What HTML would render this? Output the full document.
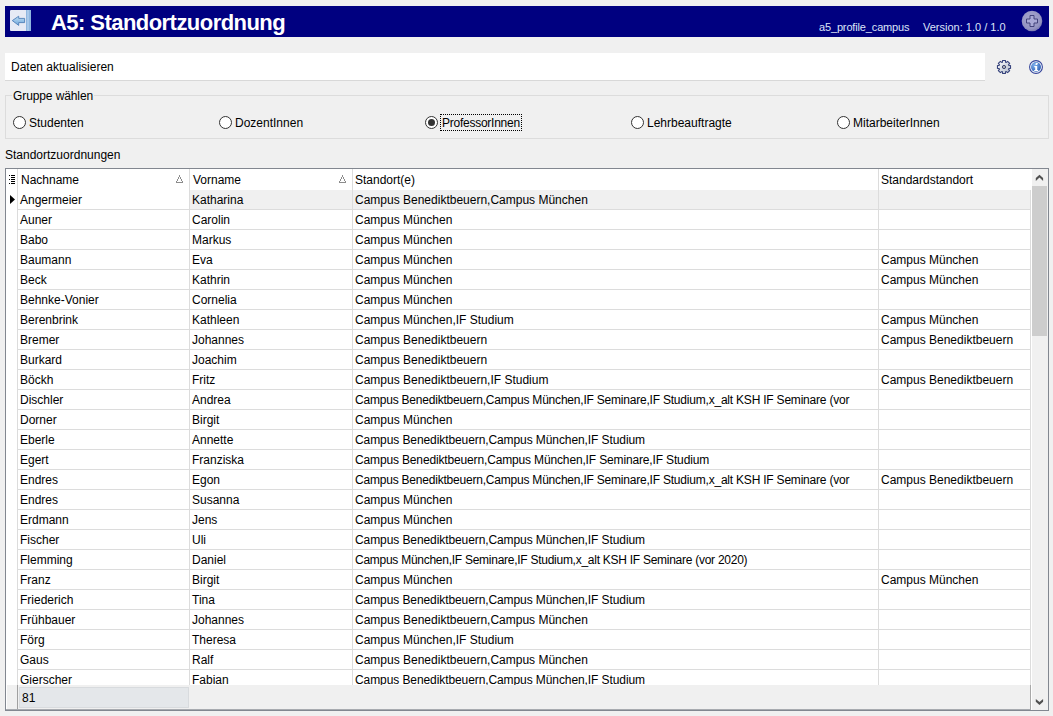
<!DOCTYPE html>
<html><head><meta charset="utf-8">
<style>
*{margin:0;padding:0;box-sizing:border-box}
html,body{width:1053px;height:716px;overflow:hidden;background:#f0f0f0;font-family:"Liberation Sans",sans-serif;font-size:12px;color:#000;position:relative}
.a{position:absolute;white-space:nowrap}
#hdr{position:absolute;left:5px;top:6px;width:1044px;height:31px;background:#000080}
.c{position:absolute;white-space:nowrap;overflow:hidden;line-height:20px;padding-left:2px}
.hl{position:absolute;left:18px;width:1012px;height:1px;background:#dcdcdc}
.vl{position:absolute;width:1px;background:#dcdcdc}
.radio{position:absolute;width:13px;height:13px;border:1px solid #333;border-radius:50%;background:#fff}
.rl{position:absolute;white-space:nowrap;line-height:18px}
</style></head><body>
<div id="hdr"></div>
<!-- back icon -->
<svg class="a" style="left:10px;top:10px" width="21" height="21" viewBox="0 0 21 21">
 <rect x="0" y="0" width="21" height="21" rx="1" fill="#e6eaf5"/>
 <rect x="16" y="0" width="5" height="21" fill="#8fb6df"/>
 <rect x="17" y="0" width="2" height="21" fill="#a8c8ea"/>
 <defs><linearGradient id="ag" x1="0" y1="0" x2="0" y2="1"><stop offset="0" stop-color="#c4e2f6"/><stop offset="1" stop-color="#6aa2d8"/></linearGradient></defs><path d="M2.3 10.6 L8.7 6.2 L8.7 8.4 L14.6 8.4 L14.6 12.6 L8.7 12.6 L8.7 15.4 Z" fill="url(#ag)" stroke="#4f7fb8" stroke-width="0.9" stroke-linejoin="round"/>
</svg>
<div class="a" style="left:51px;top:9px;font-size:22px;font-weight:bold;color:#fff;line-height:28px;letter-spacing:-0.55px">A5: Standortzuordnung</div>
<div class="a" style="left:819px;top:19px;font-size:11px;color:#dce4f8;line-height:16px;letter-spacing:-0.15px">a5_profile_campus</div>
<div class="a" style="left:923px;top:19px;font-size:11px;color:#dce4f8;line-height:16px;letter-spacing:0px">Version: 1.0 / 1.0</div>
<svg class="a" style="left:1021px;top:10px" width="22" height="22" viewBox="0 0 22 22">
 <defs><radialGradient id="pg" cx="0.45" cy="0.4" r="0.6"><stop offset="0" stop-color="#a8a8d0"/><stop offset="0.8" stop-color="#9494c2"/><stop offset="1" stop-color="#7a7ab0"/></radialGradient></defs><circle cx="11" cy="11" r="10.3" fill="url(#pg)"/>
 <path d="M9 5.5 H13 V9 H16.5 V13 H13 V16.5 H9 V13 H5.5 V9 H9 Z" fill="#aaaad6" stroke="#3a3a74" stroke-width="0.9"/>
</svg>

<!-- Daten aktualisieren -->
<div class="a" style="left:5px;top:53px;width:980px;height:28px;background:#fff;border-bottom:1px solid #d8d8d8"></div>
<div class="a" style="left:11px;top:59px;line-height:16px">Daten aktualisieren</div>
<!-- gear -->
<svg class="a" style="left:996px;top:59px" width="16" height="16" viewBox="0 0 16 16">
 <defs><linearGradient id="gg" x1="0" y1="0" x2="1" y2="1"><stop offset="0" stop-color="#ffffff"/><stop offset="1" stop-color="#aeb8c8"/></linearGradient></defs>
 <path d="M6.37 3.27 L6.61 1.45 L9.39 1.45 L9.63 3.27 L10.19 3.51 L11.65 2.38 L13.62 4.35 L12.49 5.81 L12.73 6.37 L14.55 6.61 L14.55 9.39 L12.73 9.63 L12.49 10.19 L13.62 11.65 L11.65 13.62 L10.19 12.49 L9.63 12.73 L9.39 14.55 L6.61 14.55 L6.37 12.73 L5.81 12.49 L4.35 13.62 L2.38 11.65 L3.51 10.19 L3.27 9.63 L1.45 9.39 L1.45 6.61 L3.27 6.37 L3.51 5.81 L2.38 4.35 L4.35 2.38 L5.81 3.51 Z" fill="url(#gg)" stroke="#34407a" stroke-width="1.05" stroke-linejoin="miter"/>
 <circle cx="8" cy="8" r="1.6" fill="#b8b8b8" stroke="#3a4470" stroke-width="1"/>
</svg>
<!-- info -->
<svg class="a" style="left:1028px;top:59px" width="16" height="16" viewBox="0 0 16 16">
 <defs><radialGradient id="ig" cx="0.35" cy="0.3" r="0.8"><stop offset="0" stop-color="#7fb0ea"/><stop offset="1" stop-color="#2a5cb4"/></radialGradient></defs>
 <circle cx="8" cy="8" r="6.4" fill="#fff" stroke="#34449a" stroke-width="1.1"/>
 <circle cx="8" cy="8" r="5" fill="url(#ig)"/>
 <ellipse cx="8.6" cy="4.9" rx="1.3" ry="1" fill="#fff" transform="rotate(-25 8.6 4.9)"/>
 <path d="M6.3 7 H9.2 V11 H10.2 V12.3 H6.2 V11 H7.2 V8.2 H6.3 Z" fill="#fff"/>
</svg>
<!-- Group box -->
<div class="a" style="left:5px;top:95px;width:1044px;height:44px;border:1px solid #dcdcdc"></div>
<div class="a" style="left:12px;top:88px;line-height:16px;background:#f0f0f0;padding:0 1px 0 1px;letter-spacing:-0.1px">Gruppe wählen</div>
<div class="radio" style="left:13px;top:116px"></div><div class="rl" style="left:29px;top:114px">Studenten</div>
<div class="radio" style="left:219px;top:116px"></div><div class="rl" style="left:235px;top:114px">DozentInnen</div>
<div class="radio" style="left:425px;top:116px"><div style="position:absolute;left:2px;top:2px;width:7px;height:7px;border-radius:50%;background:#333"></div></div>
<div class="rl" style="left:440px;top:114px;border:1px dotted #000;line-height:16px;padding:0 0 0 1px;height:17px;width:82px;letter-spacing:-0.25px;overflow:hidden">ProfessorInnen</div>
<div class="radio" style="left:631px;top:116px"></div><div class="rl" style="left:647px;top:114px">Lehrbeauftragte</div>
<div class="radio" style="left:837px;top:116px"></div><div class="rl" style="left:853px;top:114px">MitarbeiterInnen</div>

<div class="a" style="left:5px;top:147px;line-height:16px">Standortzuordnungen</div>

<!-- Grid -->
<div class="a" style="left:5px;top:168px;width:1044px;height:543px;border:1px solid #828790;background:#fff"></div>
<!-- header separators -->
<div class="vl" style="left:17px;top:169px;height:516px"></div>
<div class="vl" style="left:189px;top:169px;height:516px"></div>
<div class="vl" style="left:352px;top:169px;height:516px"></div>
<div class="vl" style="left:878px;top:169px;height:516px"></div>
<div class="vl" style="left:1030px;top:190px;height:495px"></div>
<div class="a" style="left:21px;top:170px;line-height:20px">Nachname</div>
<div class="a" style="left:193px;top:170px;line-height:20px">Vorname</div>
<div class="a" style="left:355px;top:170px;line-height:20px">Standort(e)</div>
<div class="a" style="left:881px;top:170px;line-height:20px">Standardstandort</div>
<svg class="a" style="left:176px;top:175px" width="7" height="8" viewBox="0 0 7 8" shape-rendering="crispEdges" fill="#8c8c8c"><rect x="3" y="0" width="1" height="2"/><rect x="2" y="2" width="1" height="2"/><rect x="4" y="2" width="1" height="2"/><rect x="1" y="4" width="1" height="2"/><rect x="5" y="4" width="1" height="2"/><rect x="0" y="6" width="1" height="1"/><rect x="6" y="6" width="1" height="1"/><rect x="0" y="7" width="7" height="1"/></svg>
<svg class="a" style="left:339px;top:175px" width="7" height="8" viewBox="0 0 7 8" shape-rendering="crispEdges" fill="#8c8c8c"><rect x="3" y="0" width="1" height="2"/><rect x="2" y="2" width="1" height="2"/><rect x="4" y="2" width="1" height="2"/><rect x="1" y="4" width="1" height="2"/><rect x="5" y="4" width="1" height="2"/><rect x="0" y="6" width="1" height="1"/><rect x="6" y="6" width="1" height="1"/><rect x="0" y="7" width="7" height="1"/></svg>
<!-- column chooser icon -->
<svg class="a" style="left:9px;top:175px" width="7" height="10" viewBox="0 0 7 10">
 <rect x="0" y="0" width="1" height="1" fill="#000"/><rect x="2" y="0" width="4" height="1" fill="#000"/>
 <rect x="2" y="2" width="4" height="1" fill="#000"/>
 <rect x="0" y="4" width="1" height="1" fill="#000"/><rect x="2" y="4" width="4" height="1" fill="#000"/>
 <rect x="2" y="6" width="4" height="1" fill="#000"/>
 <rect x="0" y="8" width="1" height="1" fill="#000"/><rect x="2" y="8" width="4" height="1" fill="#000"/>
</svg>
<!-- row indicator -->
<svg class="a" style="left:10px;top:195px" width="6" height="9" viewBox="0 0 6 9"><path d="M0 0 L5 4.5 L0 9 Z" fill="#000"/></svg>
<div class="c" style="left:18px;top:190px;width:171px;height:19px;background:#fff">Angermeier</div>
<div class="c" style="left:190px;top:190px;width:162px;height:19px;background:#f0f0f0">Katharina</div>
<div class="c" style="left:353px;top:190px;width:525px;height:19px;background:#f0f0f0">Campus Benediktbeuern,Campus München</div>
<div class="c" style="left:879px;top:190px;width:151px;height:19px;background:#f0f0f0"></div>
<div class="hl" style="top:209px"></div>
<div class="c" style="left:18px;top:210px;width:171px;height:19px;background:#fff">Auner</div>
<div class="c" style="left:190px;top:210px;width:162px;height:19px;background:#fff">Carolin</div>
<div class="c" style="left:353px;top:210px;width:525px;height:19px;background:#fff">Campus München</div>
<div class="c" style="left:879px;top:210px;width:151px;height:19px;background:#fff"></div>
<div class="hl" style="top:229px"></div>
<div class="c" style="left:18px;top:230px;width:171px;height:19px;background:#fff">Babo</div>
<div class="c" style="left:190px;top:230px;width:162px;height:19px;background:#fff">Markus</div>
<div class="c" style="left:353px;top:230px;width:525px;height:19px;background:#fff">Campus München</div>
<div class="c" style="left:879px;top:230px;width:151px;height:19px;background:#fff"></div>
<div class="hl" style="top:249px"></div>
<div class="c" style="left:18px;top:250px;width:171px;height:19px;background:#fff">Baumann</div>
<div class="c" style="left:190px;top:250px;width:162px;height:19px;background:#fff">Eva</div>
<div class="c" style="left:353px;top:250px;width:525px;height:19px;background:#fff">Campus München</div>
<div class="c" style="left:879px;top:250px;width:151px;height:19px;background:#fff">Campus München</div>
<div class="hl" style="top:269px"></div>
<div class="c" style="left:18px;top:270px;width:171px;height:19px;background:#fff">Beck</div>
<div class="c" style="left:190px;top:270px;width:162px;height:19px;background:#fff">Kathrin</div>
<div class="c" style="left:353px;top:270px;width:525px;height:19px;background:#fff">Campus München</div>
<div class="c" style="left:879px;top:270px;width:151px;height:19px;background:#fff">Campus München</div>
<div class="hl" style="top:289px"></div>
<div class="c" style="left:18px;top:290px;width:171px;height:19px;background:#fff">Behnke-Vonier</div>
<div class="c" style="left:190px;top:290px;width:162px;height:19px;background:#fff">Cornelia</div>
<div class="c" style="left:353px;top:290px;width:525px;height:19px;background:#fff">Campus München</div>
<div class="c" style="left:879px;top:290px;width:151px;height:19px;background:#fff"></div>
<div class="hl" style="top:309px"></div>
<div class="c" style="left:18px;top:310px;width:171px;height:19px;background:#fff">Berenbrink</div>
<div class="c" style="left:190px;top:310px;width:162px;height:19px;background:#fff">Kathleen</div>
<div class="c" style="left:353px;top:310px;width:525px;height:19px;background:#fff">Campus München,IF Studium</div>
<div class="c" style="left:879px;top:310px;width:151px;height:19px;background:#fff">Campus München</div>
<div class="hl" style="top:329px"></div>
<div class="c" style="left:18px;top:330px;width:171px;height:19px;background:#fff">Bremer</div>
<div class="c" style="left:190px;top:330px;width:162px;height:19px;background:#fff">Johannes</div>
<div class="c" style="left:353px;top:330px;width:525px;height:19px;background:#fff">Campus Benediktbeuern</div>
<div class="c" style="left:879px;top:330px;width:151px;height:19px;background:#fff">Campus Benediktbeuern</div>
<div class="hl" style="top:349px"></div>
<div class="c" style="left:18px;top:350px;width:171px;height:19px;background:#fff">Burkard</div>
<div class="c" style="left:190px;top:350px;width:162px;height:19px;background:#fff">Joachim</div>
<div class="c" style="left:353px;top:350px;width:525px;height:19px;background:#fff">Campus Benediktbeuern</div>
<div class="c" style="left:879px;top:350px;width:151px;height:19px;background:#fff"></div>
<div class="hl" style="top:369px"></div>
<div class="c" style="left:18px;top:370px;width:171px;height:19px;background:#fff">Böckh</div>
<div class="c" style="left:190px;top:370px;width:162px;height:19px;background:#fff">Fritz</div>
<div class="c" style="left:353px;top:370px;width:525px;height:19px;background:#fff">Campus Benediktbeuern,IF Studium</div>
<div class="c" style="left:879px;top:370px;width:151px;height:19px;background:#fff">Campus Benediktbeuern</div>
<div class="hl" style="top:389px"></div>
<div class="c" style="left:18px;top:390px;width:171px;height:19px;background:#fff">Dischler</div>
<div class="c" style="left:190px;top:390px;width:162px;height:19px;background:#fff">Andrea</div>
<div class="c" style="left:353px;top:390px;width:525px;height:19px;background:#fff"><span style="letter-spacing:-0.209px">Campus Benediktbeuern,Campus München,IF Seminare,IF Studium,x_alt KSH IF Seminare (vor</span></div>
<div class="c" style="left:879px;top:390px;width:151px;height:19px;background:#fff"></div>
<div class="hl" style="top:409px"></div>
<div class="c" style="left:18px;top:410px;width:171px;height:19px;background:#fff">Dorner</div>
<div class="c" style="left:190px;top:410px;width:162px;height:19px;background:#fff">Birgit</div>
<div class="c" style="left:353px;top:410px;width:525px;height:19px;background:#fff">Campus München</div>
<div class="c" style="left:879px;top:410px;width:151px;height:19px;background:#fff"></div>
<div class="hl" style="top:429px"></div>
<div class="c" style="left:18px;top:430px;width:171px;height:19px;background:#fff">Eberle</div>
<div class="c" style="left:190px;top:430px;width:162px;height:19px;background:#fff">Annette</div>
<div class="c" style="left:353px;top:430px;width:525px;height:19px;background:#fff"><span style="letter-spacing:-0.089px">Campus Benediktbeuern,Campus München,IF Studium</span></div>
<div class="c" style="left:879px;top:430px;width:151px;height:19px;background:#fff"></div>
<div class="hl" style="top:449px"></div>
<div class="c" style="left:18px;top:450px;width:171px;height:19px;background:#fff">Egert</div>
<div class="c" style="left:190px;top:450px;width:162px;height:19px;background:#fff">Franziska</div>
<div class="c" style="left:353px;top:450px;width:525px;height:19px;background:#fff"><span style="letter-spacing:-0.149px">Campus Benediktbeuern,Campus München,IF Seminare,IF Studium</span></div>
<div class="c" style="left:879px;top:450px;width:151px;height:19px;background:#fff"></div>
<div class="hl" style="top:469px"></div>
<div class="c" style="left:18px;top:470px;width:171px;height:19px;background:#fff">Endres</div>
<div class="c" style="left:190px;top:470px;width:162px;height:19px;background:#fff">Egon</div>
<div class="c" style="left:353px;top:470px;width:525px;height:19px;background:#fff"><span style="letter-spacing:-0.209px">Campus Benediktbeuern,Campus München,IF Seminare,IF Studium,x_alt KSH IF Seminare (vor</span></div>
<div class="c" style="left:879px;top:470px;width:151px;height:19px;background:#fff">Campus Benediktbeuern</div>
<div class="hl" style="top:489px"></div>
<div class="c" style="left:18px;top:490px;width:171px;height:19px;background:#fff">Endres</div>
<div class="c" style="left:190px;top:490px;width:162px;height:19px;background:#fff">Susanna</div>
<div class="c" style="left:353px;top:490px;width:525px;height:19px;background:#fff">Campus München</div>
<div class="c" style="left:879px;top:490px;width:151px;height:19px;background:#fff"></div>
<div class="hl" style="top:509px"></div>
<div class="c" style="left:18px;top:510px;width:171px;height:19px;background:#fff">Erdmann</div>
<div class="c" style="left:190px;top:510px;width:162px;height:19px;background:#fff">Jens</div>
<div class="c" style="left:353px;top:510px;width:525px;height:19px;background:#fff">Campus München</div>
<div class="c" style="left:879px;top:510px;width:151px;height:19px;background:#fff"></div>
<div class="hl" style="top:529px"></div>
<div class="c" style="left:18px;top:530px;width:171px;height:19px;background:#fff">Fischer</div>
<div class="c" style="left:190px;top:530px;width:162px;height:19px;background:#fff">Uli</div>
<div class="c" style="left:353px;top:530px;width:525px;height:19px;background:#fff"><span style="letter-spacing:-0.089px">Campus Benediktbeuern,Campus München,IF Studium</span></div>
<div class="c" style="left:879px;top:530px;width:151px;height:19px;background:#fff"></div>
<div class="hl" style="top:549px"></div>
<div class="c" style="left:18px;top:550px;width:171px;height:19px;background:#fff">Flemming</div>
<div class="c" style="left:190px;top:550px;width:162px;height:19px;background:#fff">Daniel</div>
<div class="c" style="left:353px;top:550px;width:525px;height:19px;background:#fff"><span style="letter-spacing:-0.265px">Campus München,IF Seminare,IF Studium,x_alt KSH IF Seminare (vor 2020)</span></div>
<div class="c" style="left:879px;top:550px;width:151px;height:19px;background:#fff"></div>
<div class="hl" style="top:569px"></div>
<div class="c" style="left:18px;top:570px;width:171px;height:19px;background:#fff">Franz</div>
<div class="c" style="left:190px;top:570px;width:162px;height:19px;background:#fff">Birgit</div>
<div class="c" style="left:353px;top:570px;width:525px;height:19px;background:#fff">Campus München</div>
<div class="c" style="left:879px;top:570px;width:151px;height:19px;background:#fff">Campus München</div>
<div class="hl" style="top:589px"></div>
<div class="c" style="left:18px;top:590px;width:171px;height:19px;background:#fff">Friederich</div>
<div class="c" style="left:190px;top:590px;width:162px;height:19px;background:#fff">Tina</div>
<div class="c" style="left:353px;top:590px;width:525px;height:19px;background:#fff"><span style="letter-spacing:-0.089px">Campus Benediktbeuern,Campus München,IF Studium</span></div>
<div class="c" style="left:879px;top:590px;width:151px;height:19px;background:#fff"></div>
<div class="hl" style="top:609px"></div>
<div class="c" style="left:18px;top:610px;width:171px;height:19px;background:#fff">Frühbauer</div>
<div class="c" style="left:190px;top:610px;width:162px;height:19px;background:#fff">Johannes</div>
<div class="c" style="left:353px;top:610px;width:525px;height:19px;background:#fff">Campus Benediktbeuern,Campus München</div>
<div class="c" style="left:879px;top:610px;width:151px;height:19px;background:#fff"></div>
<div class="hl" style="top:629px"></div>
<div class="c" style="left:18px;top:630px;width:171px;height:19px;background:#fff">Förg</div>
<div class="c" style="left:190px;top:630px;width:162px;height:19px;background:#fff">Theresa</div>
<div class="c" style="left:353px;top:630px;width:525px;height:19px;background:#fff">Campus München,IF Studium</div>
<div class="c" style="left:879px;top:630px;width:151px;height:19px;background:#fff"></div>
<div class="hl" style="top:649px"></div>
<div class="c" style="left:18px;top:650px;width:171px;height:19px;background:#fff">Gaus</div>
<div class="c" style="left:190px;top:650px;width:162px;height:19px;background:#fff">Ralf</div>
<div class="c" style="left:353px;top:650px;width:525px;height:19px;background:#fff">Campus Benediktbeuern,Campus München</div>
<div class="c" style="left:879px;top:650px;width:151px;height:19px;background:#fff"></div>
<div class="hl" style="top:669px"></div>
<div class="c" style="left:18px;top:670px;width:171px;height:15px;background:#fff">Gierscher</div>
<div class="c" style="left:190px;top:670px;width:162px;height:15px;background:#fff">Fabian</div>
<div class="c" style="left:353px;top:670px;width:525px;height:15px;background:#fff"><span style="letter-spacing:-0.089px">Campus Benediktbeuern,Campus München,IF Studium</span></div>
<div class="c" style="left:879px;top:670px;width:151px;height:15px;background:#fff"></div>
<!-- footer -->
<div class="a" style="left:7px;top:685px;width:1023px;height:24px;background:#f0f0f0"></div>
<div class="a" style="left:17px;top:685px;width:1px;height:24px;background:#a0a0a0"></div>
<div class="a" style="left:6px;top:709px;width:1025px;height:1px;background:#a8abb0"></div>
<div class="a" style="left:1030px;top:685px;width:1px;height:24px;background:#a8a8a8"></div>
<div class="a" style="left:19px;top:687px;width:170px;height:21px;background:#e4e7ea;border:1px solid #d8dbde"></div>
<div class="a" style="left:22px;top:690px;line-height:16px">81</div>
<!-- scrollbar -->
<div class="a" style="left:1032px;top:169px;width:16px;height:541px;background:#f0f0f0"></div>
<div class="a" style="left:1032px;top:186px;width:15px;height:150px;background:#cdcdcd"></div>
<svg class="a" style="left:1035px;top:174px" width="9" height="8" viewBox="0 0 9 8"><path d="M0.8 4.0 L4.5 0.8 L8.1 4.0 L8.1 6.9 L4.5 3.6 L0.8 6.9 Z" fill="#505050"/></svg>
<svg class="a" style="left:1035px;top:698px" width="9" height="8" viewBox="0 0 9 8"><path d="M0.8 0.9 L4.5 4.1 L8.1 0.9 L8.1 3.8 L4.5 7.0 L0.8 3.8 Z" fill="#505050"/></svg>
</body></html>
